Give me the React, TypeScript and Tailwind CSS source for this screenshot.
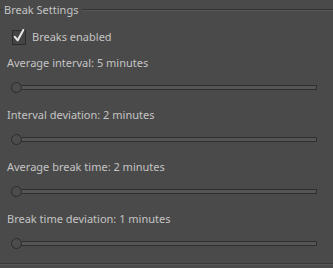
import React from "react";

interface SliderRowProps {
  label: string;
}

function SliderRow({ label }: SliderRowProps) {
  return (
    <div className="flex flex-col">
      <p className="h-[16px] leading-[16px] pl-[7px]">{label}</p>
      <div className="relative h-[20px] mt-[8px] mb-[8px]">
        <div className="absolute left-[16px] top-[6px] w-[301px] h-[5px] border border-[#2f2f2f] bg-[#555555]" />
        <div className="absolute left-[11px] top-[3px] w-[11px] h-[11px] rounded-full border border-[#2c2c2c] bg-[#4c4c4c]" />
      </div>
    </div>
  );
}

export default function App() {
  return (
    <div className="w-[333px] h-[268px] bg-[#4a4a4a] text-[#c4c4c4] text-[11px] overflow-hidden" style={{ fontFamily: '"Noto Sans", "DejaVu Sans", sans-serif' }}>
      <div className="flex items-center h-[20px]">
        <div className="w-[3px] h-[2px] border-t border-[#3a3a3a] border-b-[#575757]" />
        <span className="px-[1px] leading-[20px]">Break Settings</span>
        <div className="flex-1 ml-[3px] border-t border-[#353535] border-b border-b-[#565656]" />
      </div>
      <div className="flex items-center h-[35px] pl-[12px]">
        <div className="w-[14px] h-[15px] border border-[#2c2c2c] bg-[#444] flex items-center justify-center">
          <svg width="14" height="16" viewBox="0 0 14 16" className="-mt-[4px]">
            <path d="M2 9 L5.5 13 L12 1" stroke="#e6e6e6" strokeWidth="2.4" fill="none" strokeLinecap="round" strokeLinejoin="round" />
          </svg>
        </div>
        <span className="ml-[6px]">Breaks enabled</span>
      </div>
      <SliderRow label="Average interval: 5 minutes" />
      <SliderRow label="Interval deviation: 2 minutes" />
      <SliderRow label="Average break time: 2 minutes" />
      <SliderRow label="Break time deviation: 1 minutes" />
      <div className="border-t border-[#3a3a3a] border-b border-b-[#575757]" />
    </div>
  );
}
